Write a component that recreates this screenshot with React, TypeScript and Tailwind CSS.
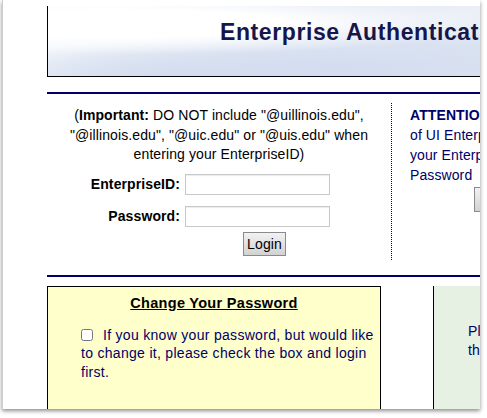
import React from "react";

const font = { fontFamily: '"Liberation Sans", Arial, Helvetica, sans-serif' };

export default function App() {
  return (
    <div className="w-[487px] h-[418px] bg-white overflow-hidden" style={font}>
      {/* browser window frame */}
      <div className="ml-[2px] w-[478px] h-[409px] bg-white border-l border-[#cfcfcf] shadow-[0_2px_4px_rgba(0,0,0,0.45)] overflow-hidden">
        <div className="w-[760px] pl-[44px] text-[14px] tracking-[0.1px] text-black">
          {/* Header banner */}
          <div className="mt-[6px] h-[71px] border-l border-b border-black bg-[radial-gradient(ellipse_at_10%_25%,#ffffff_0%,#ffffff_18%,transparent_42%),radial-gradient(ellipse_at_40%_95%,#d3ddef_0%,transparent_50%),radial-gradient(ellipse_at_75%_10%,#f2f5fb_0%,transparent_40%),radial-gradient(ellipse_at_18%_100%,#d3dcee_0%,transparent_35%),linear-gradient(90deg,#f4f7fc_0%,#dfe6f3_40%,#d8e0ef_100%)] flex items-start">
            <h1 className="ml-[172px] mt-[9px] text-[23px] font-bold text-[#16164a] tracking-[0.6px] whitespace-nowrap">
              Enterprise Authentication Service
            </h1>
          </div>

          {/* top rule */}
          <div className="mt-[15px] h-[2px] w-[433px] bg-[#000066]" />

          {/* login area */}
          <div className="flex h-[181px]">
            <div className="w-[345px] shrink-0 mt-[9px] h-[157px] border-r border-dotted border-[#000066]">
              <p className="text-center leading-[19.5px] mt-[3px] whitespace-nowrap">
                (<b>Important:</b> DO NOT include "@uillinois.edu",
                <br />
                "@illinois.edu", "@uic.edu" or "@uis.edu" when
                <br />
                entering your EnterpriseID)
              </p>
              <div className="mt-[9px] grid grid-cols-[133px_145px] gap-x-[5px] gap-y-[11px] items-center">
                <label className="text-right font-bold">EnterpriseID:</label>
                <input className="h-[21px] border border-[#c9c9c9] bg-white shadow-[inset_0_1px_1px_rgba(0,0,0,0.08)]" />
                <label className="text-right font-bold">Password:</label>
                <input type="password" className="h-[21px] border border-[#c9c9c9] bg-white shadow-[inset_0_1px_1px_rgba(0,0,0,0.08)]" />
              </div>
              <button className="ml-[196px] mt-[5px] w-[43px] h-[24px] text-[14px] border border-[#8a8a8a] bg-gradient-to-b from-[#f2f2f2] to-[#d2d2d2] leading-none">
                Login
              </button>
            </div>
            <div className="pl-[18px] mt-[10px] text-[#000066] leading-[20px] whitespace-nowrap">
              <div className="mt-[1px] font-bold">ATTENTION: Before the first use</div>
              <div>of UI Enterprise services, you must activate</div>
              <div>your EnterpriseID and set your</div>
              <div>Password</div>
              <button className="ml-[64px] mt-[2px] w-[80px] h-[25px] border border-[#8a8a8a] bg-gradient-to-b from-[#f2f2f2] to-[#d2d2d2] text-black">
                Activate
              </button>
            </div>
          </div>

          {/* second rule */}
          <div className="h-[2px] w-[433px] bg-[#000066]" />

          {/* bottom boxes */}
          <div className="mt-[9px] flex gap-[52px]">
            <div className="w-[334px] shrink-0 h-[140px] bg-[#ffffcc] border border-black">
              <div className="mt-[6px] text-center font-bold underline text-[14.5px] tracking-[0.3px]">Change Your Password</div>
              <p className="mt-[11px] ml-[33px] mr-[4px] leading-[18.5px] tracking-[0.3px] text-[#000066]">
                <input type="checkbox" className="w-[12px] h-[12px] align-[-1px] mr-[10px] ml-0" />
                If you know your password, but would like to change it, please check the box and login first.
              </p>
            </div>
            <div className="w-[300px] shrink-0 h-[140px] bg-[#e6f1e3] border-l border-black text-[#000066]">
              <p className="mt-[36px] ml-[34px] leading-[18.5px] whitespace-nowrap">
                Please contact your unit
                <br />
                the Help Desk
              </p>
            </div>
          </div>
        </div>
      </div>
    </div>
  );
}
